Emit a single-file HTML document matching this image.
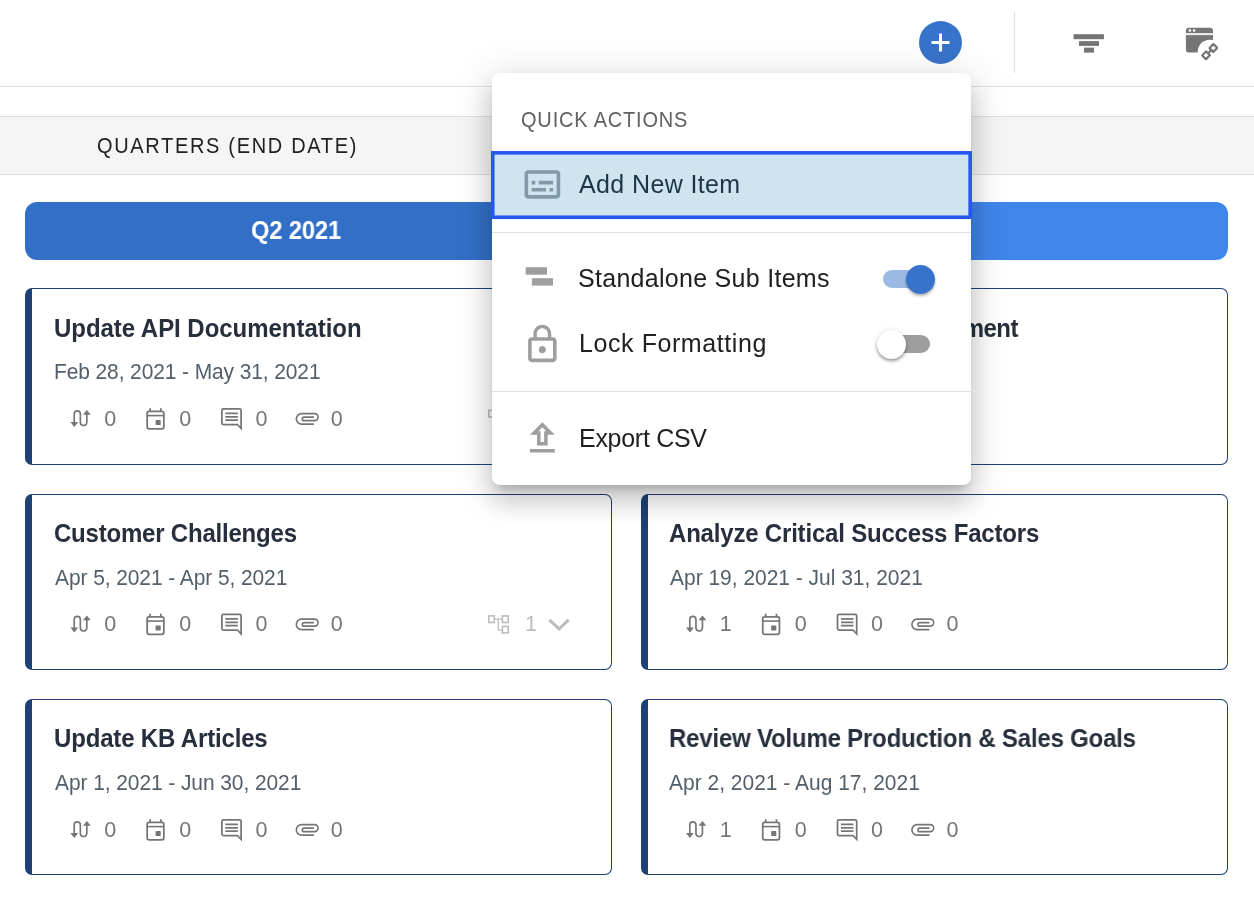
<!DOCTYPE html>
<html lang="en">
<head>
<meta charset="utf-8">
<title>Quarters Board</title>
<style>
*{box-sizing:border-box;margin:0;padding:0}
html,body{width:1254px;height:910px;overflow:hidden;background:#fff}
body{position:relative;font-family:"Liberation Sans",Arial,sans-serif;color:#212121}
#root{position:absolute;left:0;top:0;width:1254px;height:910px;will-change:transform}
.abs{position:absolute}
.t{position:absolute;white-space:nowrap;line-height:1}
#topline{left:0;top:86px;width:1254px;height:1px;background:#e0e0e0}
#band{left:0;top:116px;width:1254px;height:59px;background:#f5f5f5;border-top:1px solid #e0e0e0;border-bottom:1px solid #e0e0e0}
#plus{left:919px;top:21px;width:43px;height:43px;border-radius:50%;background:#3873cb}
#vdiv{left:1014px;top:12px;width:1px;height:61px;background:#e0e0e0}
#qbar{left:25px;top:202px;width:1203px;height:58px;border-radius:12px;background:linear-gradient(90deg,#3270c7 0,#3270c7 560px,#3f86eb 560px)}
.card{position:absolute;width:587px;height:177px;border:1px solid #1d4177;border-left:7px solid #1d4177;border-radius:7px;background:#fff}
.card .n{position:absolute;font-size:21.5px;color:#757575;line-height:1}
.card svg{position:absolute}
#pop{left:492px;top:73px;width:479px;height:412px;border-radius:8px;background:#fff;box-shadow:0 8px 10px -5px rgba(0,0,0,.2),0 16px 26px 2px rgba(0,0,0,.14),0 6px 36px 6px rgba(0,0,0,.12)}
#hl{left:491px;top:151px;width:481px;height:68px}
.sep{position:absolute;left:492px;width:479px;height:1px;background:#e0e0e0}
.mi{position:absolute;left:579px;font-size:24px;color:#212121;white-space:nowrap;line-height:1;letter-spacing:.3px}
</style>
</head>
<body>
<div id="root">
<div class="abs" id="topline"></div>
<div class="abs" id="band"></div>
<div class="t" id="qtitle" style="left:97.00px;top:136.00px;font-size:21.5px;color:#212121;letter-spacing:1.800px;transform:scaleX(0.93);transform-origin:0 50%;">QUARTERS (END DATE)</div>

<div class="abs" id="plus">
<svg width="43" height="43" viewBox="0 0 43 43"><path d="M21.5 12.5v18M12.5 21.5h18" stroke="#fff" stroke-width="3" stroke-linecap="butt" fill="none"/></svg>
</div>
<div class="abs" id="vdiv"></div>
<svg class="abs" style="left:1070px;top:30px" width="40" height="26" viewBox="0 0 40 26"><g fill="#757575"><rect x="3.6" y="4.2" width="30.3" height="5"/><rect x="9" y="11.1" width="20" height="4.8"/><rect x="14" y="17.6" width="10" height="5"/></g></svg>
<svg class="abs" id="winicon" style="left:1184px;top:26px" width="38" height="38" viewBox="0 0 38 38">
<path fill="#757575" d="M4.9 1.8H26a3 3 0 0 1 3 3V14.1A12 12 0 0 0 13.74 26.6H4.9a3 3 0 0 1-3-3V4.8a3 3 0 0 1 3-3z"/>
<rect x="1.9" y="7.1" width="27.2" height="2" fill="#efefef"/>
<circle cx="5.9" cy="4.5" r="1.3" fill="#fff"/><circle cx="10.1" cy="4.5" r="1.3" fill="#fff"/>
<g transform="translate(25.7 25.65) rotate(-45)" fill="none" stroke="#757575" stroke-width="2.2"><rect x="2.3" y="-2.75" width="5.7" height="5.5" rx="0.5"/><rect x="-8" y="-2.75" width="5.7" height="5.5" rx="0.5"/><path d="M-3.3 0h6.6"/></g>
</svg>

<div class="abs" id="qbar"></div>
<div class="t" id="q2" style="left:251.00px;top:218.00px;font-size:25px;font-weight:bold;color:#fff;letter-spacing:-0.153px;transform:scaleX(0.95);transform-origin:0 50%;">Q2 2021</div>

<div class="card" id="c1" style="left:25px;top:288px;height:177px">
<div class="t title" id="c1t" style="left:22.00px;top:27.00px;font-size:25px;font-weight:bold;color:#262f3b;letter-spacing:-0.040px;transform:scaleX(0.96);transform-origin:0 50%;">Update API Documentation</div>
<div class="t date" id="c1d" style="left:22.00px;top:73.00px;font-size:21.5px;color:#525f6b;letter-spacing:-0.103px;transform:scaleX(0.975);transform-origin:0 50%;">Feb 28, 2021 - May 31, 2021</div>
<svg style="left:28px;top:111px" width="530" height="36" viewBox="60.00 400.00 530 36"><g fill="none" stroke="#757575"><path stroke-width="1.65" d="M74.2 423V414a3.07 3.07 0 0 1 6.15 0V422.25a3.25 3.25 0 0 0 6.5 0V414"/><rect x="147.15" y="411.25" width="16.7" height="17.5" rx="2" stroke-width="1.75"/><path stroke-width="1.6" d="M147.2 415.6H163.8"/><path stroke-width="1.75" d="M150.1 408.2V411.5M160.85 408.2V411.5"/><path stroke-width="1.75" stroke-linejoin="miter" d="M241.1 428.3V410.4Q241.1 408.9 239.6 408.9H223.4Q221.9 408.9 221.9 410.4V423Q221.9 424.5 223.4 424.5H237.4Z"/><path stroke-width="1.75" d="M225.3 413.4H237.9M225.3 416.8H237.9M225.3 420.1H237.9"/><path stroke-width="1.6" d="M313.9 424.15H301.6a5.27 5.27 0 0 1 0-10.55H314.6a3.52 3.52 0 0 1 0 7.04H304.06a1.76 1.76 0 0 1 0-3.52H313.9"/></g><g fill="#757575"><path d="M70.4 422.1H78.2L74.3 426.9Z"/><path d="M82.9 414.8H90.8L86.85 410Z"/><rect x="155.6" y="420.1" width="5.1" height="4.9" rx="0.6"/></g><g fill="none" stroke="#bdbdbd"><g stroke-width="1.6"><rect x="488.8" y="410.4" width="5.5" height="6.6"/><rect x="502.4" y="410.4" width="5.8" height="6.6"/><rect x="502.4" y="420.9" width="5.8" height="6.5"/></g><path d="M494.3 413.6h8.1M498.25 413.6v11h4.2" stroke-width="1.3"/><path d="M549.4 414.3L559.05 423.4L568.7 414.3" stroke-width="3.1"/></g></svg>
<div class="n" style="left:72.20px;top:120px">0</div>
<div class="n" style="left:147.20px;top:120px">0</div>
<div class="n" style="left:223.40px;top:120px">0</div>
<div class="n" style="left:298.80px;top:120px">0</div>
<div class="n" style="left:493.00px;top:120px;color:#bdbdbd">1</div>
</div>
<div class="card" id="c2" style="left:641px;top:288px;height:177px">
<div class="t title" id="c2t" style="left:22.00px;top:27.00px;font-size:25px;font-weight:bold;color:#262f3b;letter-spacing:-0.574px;transform:scaleX(0.96);transform-origin:0 50%;">Stakeholder Needs Assessment</div>
<div class="t date" id="c2d" style="left:21.00px;top:73.00px;font-size:21.5px;color:#525f6b;letter-spacing:-0.189px;transform:scaleX(0.975);transform-origin:0 50%;">Mar 15, 2021 - Jun 4, 2021</div>
<svg style="left:27px;top:111px" width="530" height="36" viewBox="59.40 400.00 530 36"><g fill="none" stroke="#757575"><path stroke-width="1.65" d="M74.2 423V414a3.07 3.07 0 0 1 6.15 0V422.25a3.25 3.25 0 0 0 6.5 0V414"/><rect x="147.15" y="411.25" width="16.7" height="17.5" rx="2" stroke-width="1.75"/><path stroke-width="1.6" d="M147.2 415.6H163.8"/><path stroke-width="1.75" d="M150.1 408.2V411.5M160.85 408.2V411.5"/><path stroke-width="1.75" stroke-linejoin="miter" d="M241.1 428.3V410.4Q241.1 408.9 239.6 408.9H223.4Q221.9 408.9 221.9 410.4V423Q221.9 424.5 223.4 424.5H237.4Z"/><path stroke-width="1.75" d="M225.3 413.4H237.9M225.3 416.8H237.9M225.3 420.1H237.9"/><path stroke-width="1.6" d="M313.9 424.15H301.6a5.27 5.27 0 0 1 0-10.55H314.6a3.52 3.52 0 0 1 0 7.04H304.06a1.76 1.76 0 0 1 0-3.52H313.9"/></g><g fill="#757575"><path d="M70.4 422.1H78.2L74.3 426.9Z"/><path d="M82.9 414.8H90.8L86.85 410Z"/><rect x="155.6" y="420.1" width="5.1" height="4.9" rx="0.6"/></g></svg>
<div class="n" style="left:71.80px;top:120px">0</div>
<div class="n" style="left:146.80px;top:120px">0</div>
<div class="n" style="left:223.00px;top:120px">0</div>
<div class="n" style="left:298.40px;top:120px">0</div>
</div>
<div class="card" id="c3" style="left:25px;top:494px;height:176px">
<div class="t title" id="c3t" style="left:22.00px;top:26.00px;font-size:25px;font-weight:bold;color:#262f3b;letter-spacing:-0.217px;transform:scaleX(0.96);transform-origin:0 50%;">Customer Challenges</div>
<div class="t date" id="c3d" style="left:23.00px;top:73.00px;font-size:21.5px;color:#525f6b;letter-spacing:-0.081px;transform:scaleX(0.975);transform-origin:0 50%;">Apr 5, 2021 - Apr 5, 2021</div>
<svg style="left:28px;top:110px" width="530" height="36" viewBox="60.00 399.50 530 36"><g fill="none" stroke="#757575"><path stroke-width="1.65" d="M74.2 423V414a3.07 3.07 0 0 1 6.15 0V422.25a3.25 3.25 0 0 0 6.5 0V414"/><rect x="147.15" y="411.25" width="16.7" height="17.5" rx="2" stroke-width="1.75"/><path stroke-width="1.6" d="M147.2 415.6H163.8"/><path stroke-width="1.75" d="M150.1 408.2V411.5M160.85 408.2V411.5"/><path stroke-width="1.75" stroke-linejoin="miter" d="M241.1 428.3V410.4Q241.1 408.9 239.6 408.9H223.4Q221.9 408.9 221.9 410.4V423Q221.9 424.5 223.4 424.5H237.4Z"/><path stroke-width="1.75" d="M225.3 413.4H237.9M225.3 416.8H237.9M225.3 420.1H237.9"/><path stroke-width="1.6" d="M313.9 424.15H301.6a5.27 5.27 0 0 1 0-10.55H314.6a3.52 3.52 0 0 1 0 7.04H304.06a1.76 1.76 0 0 1 0-3.52H313.9"/></g><g fill="#757575"><path d="M70.4 422.1H78.2L74.3 426.9Z"/><path d="M82.9 414.8H90.8L86.85 410Z"/><rect x="155.6" y="420.1" width="5.1" height="4.9" rx="0.6"/></g><g fill="none" stroke="#bdbdbd"><g stroke-width="1.6"><rect x="488.8" y="410.4" width="5.5" height="6.6"/><rect x="502.4" y="410.4" width="5.8" height="6.6"/><rect x="502.4" y="420.9" width="5.8" height="6.5"/></g><path d="M494.3 413.6h8.1M498.25 413.6v11h4.2" stroke-width="1.3"/><path d="M549.4 414.3L559.05 423.4L568.7 414.3" stroke-width="3.1"/></g></svg>
<div class="n" style="left:72.20px;top:119px">0</div>
<div class="n" style="left:147.20px;top:119px">0</div>
<div class="n" style="left:223.40px;top:119px">0</div>
<div class="n" style="left:298.80px;top:119px">0</div>
<div class="n" style="left:493.00px;top:119px;color:#bdbdbd">1</div>
</div>
<div class="card" id="c4" style="left:641px;top:494px;height:176px">
<div class="t title" id="c4t" style="left:21.00px;top:26.00px;font-size:25px;font-weight:bold;color:#262f3b;letter-spacing:-0.198px;transform:scaleX(0.96);transform-origin:0 50%;">Analyze Critical Success Factors</div>
<div class="t date" id="c4d" style="left:22.00px;top:73.00px;font-size:21.5px;color:#525f6b;letter-spacing:-0.004px;transform:scaleX(0.975);transform-origin:0 50%;">Apr 19, 2021 - Jul 31, 2021</div>
<svg style="left:27px;top:110px" width="530" height="36" viewBox="59.40 399.50 530 36"><g fill="none" stroke="#757575"><path stroke-width="1.65" d="M74.2 423V414a3.07 3.07 0 0 1 6.15 0V422.25a3.25 3.25 0 0 0 6.5 0V414"/><rect x="147.15" y="411.25" width="16.7" height="17.5" rx="2" stroke-width="1.75"/><path stroke-width="1.6" d="M147.2 415.6H163.8"/><path stroke-width="1.75" d="M150.1 408.2V411.5M160.85 408.2V411.5"/><path stroke-width="1.75" stroke-linejoin="miter" d="M241.1 428.3V410.4Q241.1 408.9 239.6 408.9H223.4Q221.9 408.9 221.9 410.4V423Q221.9 424.5 223.4 424.5H237.4Z"/><path stroke-width="1.75" d="M225.3 413.4H237.9M225.3 416.8H237.9M225.3 420.1H237.9"/><path stroke-width="1.6" d="M313.9 424.15H301.6a5.27 5.27 0 0 1 0-10.55H314.6a3.52 3.52 0 0 1 0 7.04H304.06a1.76 1.76 0 0 1 0-3.52H313.9"/></g><g fill="#757575"><path d="M70.4 422.1H78.2L74.3 426.9Z"/><path d="M82.9 414.8H90.8L86.85 410Z"/><rect x="155.6" y="420.1" width="5.1" height="4.9" rx="0.6"/></g></svg>
<div class="n" style="left:71.80px;top:119px">1</div>
<div class="n" style="left:146.80px;top:119px">0</div>
<div class="n" style="left:223.00px;top:119px">0</div>
<div class="n" style="left:298.40px;top:119px">0</div>
</div>
<div class="card" id="c5" style="left:25px;top:699px;height:176px">
<div class="t title" id="c5t" style="left:22.00px;top:26.00px;font-size:25px;font-weight:bold;color:#262f3b;letter-spacing:-0.171px;transform:scaleX(0.96);transform-origin:0 50%;">Update KB Articles</div>
<div class="t date" id="c5d" style="left:23.00px;top:73.00px;font-size:21.5px;color:#525f6b;letter-spacing:-0.077px;transform:scaleX(0.975);transform-origin:0 50%;">Apr 1, 2021 - Jun 30, 2021</div>
<svg style="left:28px;top:111px" width="530" height="36" viewBox="60.00 400.00 530 36"><g fill="none" stroke="#757575"><path stroke-width="1.65" d="M74.2 423V414a3.07 3.07 0 0 1 6.15 0V422.25a3.25 3.25 0 0 0 6.5 0V414"/><rect x="147.15" y="411.25" width="16.7" height="17.5" rx="2" stroke-width="1.75"/><path stroke-width="1.6" d="M147.2 415.6H163.8"/><path stroke-width="1.75" d="M150.1 408.2V411.5M160.85 408.2V411.5"/><path stroke-width="1.75" stroke-linejoin="miter" d="M241.1 428.3V410.4Q241.1 408.9 239.6 408.9H223.4Q221.9 408.9 221.9 410.4V423Q221.9 424.5 223.4 424.5H237.4Z"/><path stroke-width="1.75" d="M225.3 413.4H237.9M225.3 416.8H237.9M225.3 420.1H237.9"/><path stroke-width="1.6" d="M313.9 424.15H301.6a5.27 5.27 0 0 1 0-10.55H314.6a3.52 3.52 0 0 1 0 7.04H304.06a1.76 1.76 0 0 1 0-3.52H313.9"/></g><g fill="#757575"><path d="M70.4 422.1H78.2L74.3 426.9Z"/><path d="M82.9 414.8H90.8L86.85 410Z"/><rect x="155.6" y="420.1" width="5.1" height="4.9" rx="0.6"/></g></svg>
<div class="n" style="left:72.20px;top:120px">0</div>
<div class="n" style="left:147.20px;top:120px">0</div>
<div class="n" style="left:223.40px;top:120px">0</div>
<div class="n" style="left:298.80px;top:120px">0</div>
</div>
<div class="card" id="c6" style="left:641px;top:699px;height:176px">
<div class="t title" id="c6t" style="left:21.00px;top:26.00px;font-size:25px;font-weight:bold;color:#262f3b;letter-spacing:-0.206px;transform:scaleX(0.96);transform-origin:0 50%;">Review Volume Production &amp; Sales Goals</div>
<div class="t date" id="c6d" style="left:21.00px;top:73.00px;font-size:21.5px;color:#525f6b;letter-spacing:0.010px;transform:scaleX(0.975);transform-origin:0 50%;">Apr 2, 2021 - Aug 17, 2021</div>
<svg style="left:27px;top:111px" width="530" height="36" viewBox="59.40 400.00 530 36"><g fill="none" stroke="#757575"><path stroke-width="1.65" d="M74.2 423V414a3.07 3.07 0 0 1 6.15 0V422.25a3.25 3.25 0 0 0 6.5 0V414"/><rect x="147.15" y="411.25" width="16.7" height="17.5" rx="2" stroke-width="1.75"/><path stroke-width="1.6" d="M147.2 415.6H163.8"/><path stroke-width="1.75" d="M150.1 408.2V411.5M160.85 408.2V411.5"/><path stroke-width="1.75" stroke-linejoin="miter" d="M241.1 428.3V410.4Q241.1 408.9 239.6 408.9H223.4Q221.9 408.9 221.9 410.4V423Q221.9 424.5 223.4 424.5H237.4Z"/><path stroke-width="1.75" d="M225.3 413.4H237.9M225.3 416.8H237.9M225.3 420.1H237.9"/><path stroke-width="1.6" d="M313.9 424.15H301.6a5.27 5.27 0 0 1 0-10.55H314.6a3.52 3.52 0 0 1 0 7.04H304.06a1.76 1.76 0 0 1 0-3.52H313.9"/></g><g fill="#757575"><path d="M70.4 422.1H78.2L74.3 426.9Z"/><path d="M82.9 414.8H90.8L86.85 410Z"/><rect x="155.6" y="420.1" width="5.1" height="4.9" rx="0.6"/></g></svg>
<div class="n" style="left:71.80px;top:120px">1</div>
<div class="n" style="left:146.80px;top:120px">0</div>
<div class="n" style="left:223.00px;top:120px">0</div>
<div class="n" style="left:298.40px;top:120px">0</div>
</div>

<div class="abs" id="pop"></div>
<div class="t" id="qa" style="left:521.00px;top:110.00px;font-size:21.5px;color:#616161;letter-spacing:0.879px;transform:scaleX(0.93);transform-origin:0 50%;">QUICK ACTIONS</div>
<svg class="abs" id="hl" viewBox="0 0 481 68"><rect x="1.75" y="1.85" width="477.4" height="64.4" fill="#cfe4f0" stroke="#2458f0" stroke-width="3.6"/></svg>
<div class="sep" style="top:232px"></div>
<div class="sep" style="top:391px"></div>

<svg class="abs" style="left:520.9px;top:162.8px" width="42.8" height="42.8" viewBox="0 0 24 24"><path fill="#8199a7" d="M20 4H4c-1.100 0-2 .9-2 2v12c0 1.100.9 2 2 2h16c1.100 0 2-.9 2-2V6c0-1.100-.9-2-2-2zm0 14H4V6h16v12zM6 10h2v2H6zm0 4h8v2H6zm10 0h2v2h-2zm-6-4h8v2h-8z"/></svg>
<svg class="abs" style="left:520px;top:260px" width="40" height="32" viewBox="0 0 40 32"><g fill="#9e9e9e"><rect x="5.7" y="7.2" width="21.3" height="7.5"/><rect x="11.9" y="18.2" width="21.1" height="7.4"/></g></svg>
<svg class="abs" style="left:521.2px;top:323.1px" width="42.7" height="42.7" viewBox="0 0 24 24"><path fill="#9e9e9e" d="M12 17c1.100 0 2-.9 2-2s-.9-2-2-2-2 .9-2 2 .9 2 2 2zm6-9h-1V6c0-2.760-2.240-5-5-5S7 3.240 7 6v2H6c-1.100 0-2 .9-2 2v10c0 1.100.9 2 2 2h12c1.100 0 2-.9 2-2V10c0-1.100-.9-2-2-2zM8.900 6c0-1.710 1.390-3.100 3.100-3.100s3.100 1.390 3.100 3.100v2H8.900V6zM18 20H6V10h12v10z"/></svg>
<svg class="abs" style="left:521.2px;top:417.3px" width="42.7" height="42.7" viewBox="0 0 24 24"><path fill="#9e9e9e" d="M9 16h6v-6h4l-7-7-7 7h4v6zm3-10.170L14.170 8H13v6h-2V8H9.830L12 5.830zM5 18h14v2H5z"/></svg>
<div class="abs tog" style="left:883px;top:270px;width:47px;height:18px;border-radius:9px;background:#9bb9e5"></div>
<div class="abs tog" style="left:906px;top:265px;width:29px;height:29px;border-radius:50%;background:#3873cb;box-shadow:0 2px 3px rgba(0,0,0,.3)"></div>
<div class="abs tog" style="left:883px;top:335px;width:47px;height:18px;border-radius:9px;background:#9e9e9e"></div>
<div class="abs tog" style="left:877px;top:330px;width:29px;height:29px;border-radius:50%;background:#fff;box-shadow:0 2px 3px rgba(0,0,0,.35),0 1px 7px rgba(0,0,0,.12)"></div>
<div class="t" id="m1" style="left:579.00px;top:172.00px;font-size:25px;color:#1c3545;letter-spacing:0.380px;">Add New Item</div>
<div class="t" id="m2" style="left:578.00px;top:266.00px;font-size:25px;color:#212121;letter-spacing:0.288px;">Standalone Sub Items</div>
<div class="t" id="m3" style="left:579.00px;top:331.00px;font-size:25px;color:#212121;letter-spacing:0.575px;">Lock Formatting</div>
<div class="t" id="m4" style="left:579.00px;top:426.00px;font-size:25px;color:#212121;letter-spacing:-0.285px;">Export CSV</div>
</div>
</body>
</html>
